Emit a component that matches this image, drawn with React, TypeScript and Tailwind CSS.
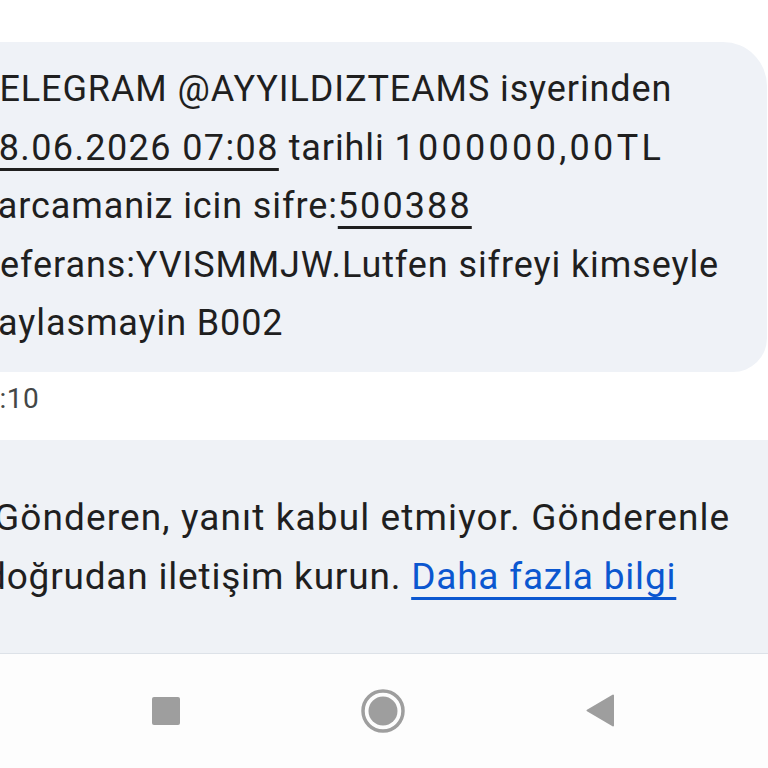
import React from "react";

const MessageBubble = () => {
  return (
    <div className="ml-[-60px] mr-[1px] mt-[42px] h-[330px] bg-[#eff2f7] rounded-tr-[44px] rounded-br-[34px] rounded-l-[34px] pl-[37px] pt-[18px] text-[36px] leading-[58.5px] tracking-[0.9px] text-[#1f1f1f]">
      <p>TELEGRAM @AYYILDIZTEAMS isyerinden</p>
      <p>
        <span className="underline decoration-[3px] underline-offset-[8px] tracking-[1.4px]">28.06.2026 07:08</span> tarihli{" "}
        <span className="tracking-[3.3px]">1000000,00TL</span>
      </p>
      <p>
        harcamaniz icin sifre:<span className="underline decoration-[3px] underline-offset-[8px] tracking-[2.1px]">500388</span>
      </p>
      <p>Referans:YVISMMJW.Lutfen sifreyi kimseyle</p>
      <p>paylasmayin B002</p>
    </div>
  );
};

const NavBar = () => {
  return (
    <div className="h-[115px] bg-[#fdfdfd] border-t border-[#dde2e8] flex items-center justify-between pl-[152px] pr-[154px] pb-[1px]">
      <div className="w-[28px] h-[28px] bg-[#9e9e9e] rounded-[2px]" />
      <svg width="44" height="44" viewBox="0 0 44 44">
        <circle cx="22" cy="22" r="20" fill="none" stroke="#9e9e9e" strokeWidth="3.5" />
        <circle cx="22" cy="22" r="14.5" fill="#9e9e9e" />
      </svg>
      <svg width="28" height="33" viewBox="0 0 28 33">
        <path d="M27 1.5 L27 31.5 L1.5 16.5 Z" fill="#9e9e9e" strokeLinejoin="round" stroke="#9e9e9e" strokeWidth="2" />
      </svg>
    </div>
  );
};

export default function App() {
  return (
    <div className="w-[768px] h-[768px] overflow-hidden bg-white flex flex-col" style={{ fontFamily: "Roboto, 'Noto Sans', sans-serif" }}>
      <MessageBubble />
      <div className="ml-[-33px] mt-[11px] h-[57px] text-[28px] leading-[32px] tracking-[0.5px] text-[#444746]">09:10</div>
      <div className="flex-1 bg-[#eff2f6] pt-[48px] overflow-hidden">
        <div className="ml-[-6px] text-[37px] leading-[59px] tracking-[1.1px] text-[#1f1f1f]">
          <p>Gönderen, yanıt kabul etmiyor. Gönderenle</p>
          <p className="ml-[-9px] tracking-[0.8px]">
            doğrudan iletişim kurun.{" "}
            <span className="text-[#0b57d0] underline decoration-[3px] underline-offset-[8px]">Daha fazla bilgi</span>
          </p>
        </div>
      </div>
      <NavBar />
    </div>
  );
}
